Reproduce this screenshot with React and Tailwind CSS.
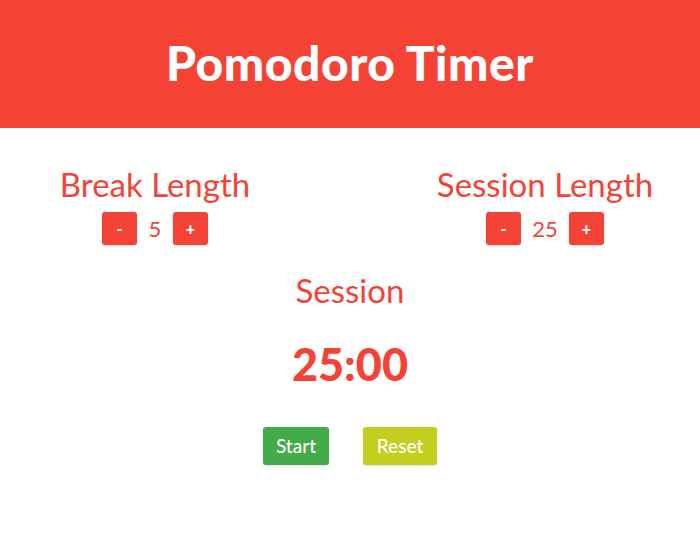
export default function App() {
  const font = { fontFamily: "Lato, 'Open Sans', sans-serif" };
  return (
    <div className="w-[700px] h-[560px] bg-white" style={font}>
      <div className="h-[128px] bg-[#f44234] flex items-center justify-center">
        <h1 className="text-white text-[48px] font-black tracking-[0.5px] leading-[56px] -mt-[2px]">Pomodoro Timer</h1>
      </div>
      <div className="flex justify-between px-[30px] pt-[38px]">
        <div className="w-[250px] flex flex-col items-center">
          <div className="text-[#f44336] text-[33px] leading-[36px]">Break Length</div>
          <div className="flex items-center mt-[10px]">
            <button className="w-[35px] h-[33px] bg-[#f44336] rounded-[3px] text-white font-black text-[16px] flex items-center justify-center shadow-sm">-</button>
            <span className="w-[36px] text-center text-[#f44336] text-[22px]">5</span>
            <button className="w-[35px] h-[33px] bg-[#f44336] rounded-[3px] text-white font-black text-[16px] flex items-center justify-center shadow-sm">+</button>
          </div>
        </div>
        <div className="w-[250px] flex flex-col items-center">
          <div className="text-[#f44336] text-[33px] leading-[36px]">Session Length</div>
          <div className="flex items-center mt-[10px]">
            <button className="w-[35px] h-[33px] bg-[#f44336] rounded-[3px] text-white font-black text-[16px] flex items-center justify-center shadow-sm">-</button>
            <span className="w-[48px] text-center text-[#f44336] text-[22px]">25</span>
            <button className="w-[35px] h-[33px] bg-[#f44336] rounded-[3px] text-white font-black text-[16px] flex items-center justify-center shadow-sm">+</button>
          </div>
        </div>
      </div>
      <div className="flex flex-col items-center">
        <div className="mt-[27px] text-[#f44336] text-[33px] leading-[36px]">Session</div>
        <div className="mt-[33px] text-[#f44336] text-[45px] font-black leading-[46px]">25:00</div>
        <div className="flex gap-[34px] mt-[40px]">
          <button className="w-[66px] h-[38px] bg-[#43ac48] rounded-[3px] text-white text-[19px] font-medium shadow-sm">Start</button>
          <button className="w-[74px] h-[38px] bg-[#c3ce1e] rounded-[3px] text-white text-[19px] font-medium shadow-sm">Reset</button>
        </div>
      </div>
    </div>
  );
}
